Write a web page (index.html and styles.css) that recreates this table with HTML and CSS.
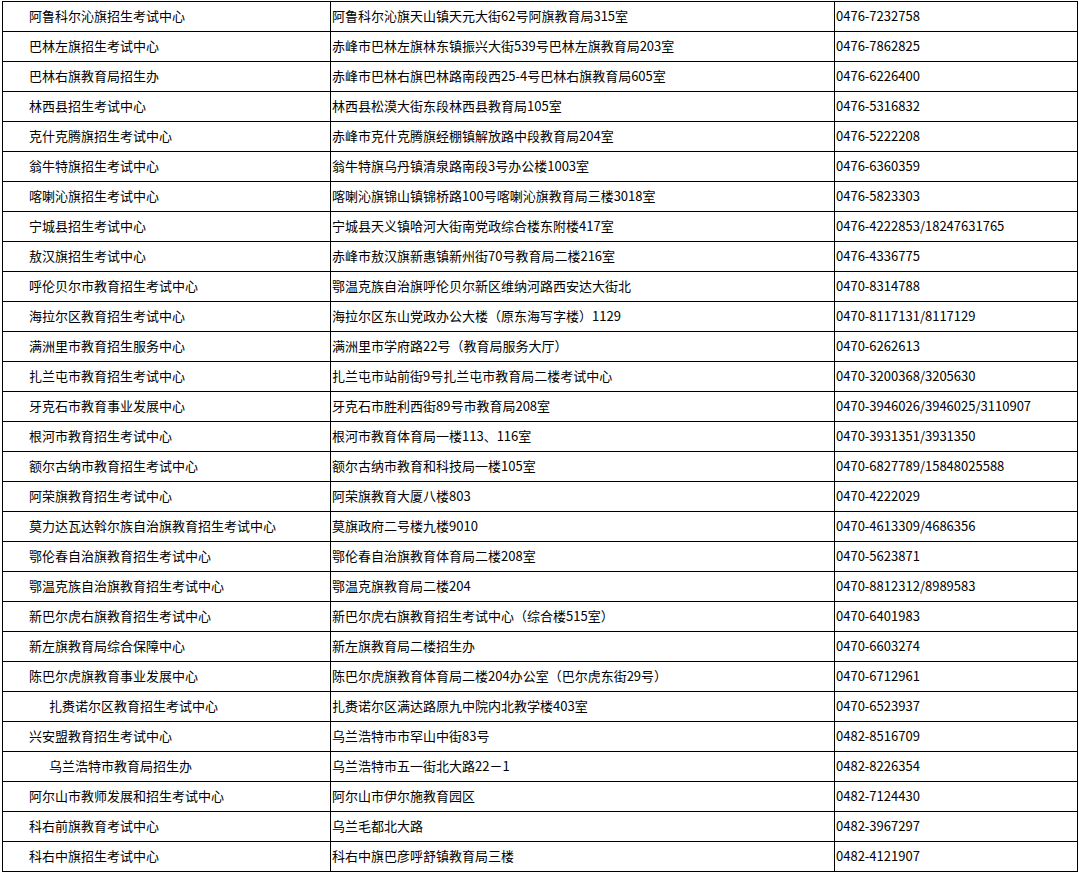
FILE: index.html
```html
<!DOCTYPE html>
<html lang="zh-CN">
<head>
<meta charset="utf-8">
<title>招生考试机构</title>
<link rel="stylesheet" href="styles.css">
</head>
<body>
<table class="tbl">
<colgroup><col class="w1"><col class="w2"><col class="w3"></colgroup>
<tbody>
<tr><td class="c1">阿鲁科尔沁旗招生考试中心</td><td class="c2">阿鲁科尔沁旗天山镇天元大街62号阿旗教育局315室</td><td class="c3">0476-7232758</td></tr>
<tr><td class="c1">巴林左旗招生考试中心</td><td class="c2">赤峰市巴林左旗林东镇振兴大街539号巴林左旗教育局203室</td><td class="c3">0476-7862825</td></tr>
<tr><td class="c1">巴林右旗教育局招生办</td><td class="c2">赤峰市巴林右旗巴林路南段西25-4号巴林右旗教育局605室</td><td class="c3">0476-6226400</td></tr>
<tr><td class="c1">林西县招生考试中心</td><td class="c2">林西县松漠大街东段林西县教育局105室</td><td class="c3">0476-5316832</td></tr>
<tr><td class="c1">克什克腾旗招生考试中心</td><td class="c2">赤峰市克什克腾旗经棚镇解放路中段教育局204室</td><td class="c3">0476-5222208</td></tr>
<tr><td class="c1">翁牛特旗招生考试中心</td><td class="c2">翁牛特旗乌丹镇清泉路南段3号办公楼1003室</td><td class="c3">0476-6360359</td></tr>
<tr><td class="c1">喀喇沁旗招生考试中心</td><td class="c2">喀喇沁旗锦山镇锦桥路100号喀喇沁旗教育局三楼3018室</td><td class="c3">0476-5823303</td></tr>
<tr><td class="c1">宁城县招生考试中心</td><td class="c2">宁城县天义镇哈河大街南党政综合楼东附楼417室</td><td class="c3">0476-4222853/18247631765</td></tr>
<tr><td class="c1">敖汉旗招生考试中心</td><td class="c2">赤峰市敖汉旗新惠镇新州街70号教育局二楼216室</td><td class="c3">0476-4336775</td></tr>
<tr><td class="c1">呼伦贝尔市教育招生考试中心</td><td class="c2">鄂温克族自治旗呼伦贝尔新区维纳河路西安达大街北</td><td class="c3">0470-8314788</td></tr>
<tr><td class="c1">海拉尔区教育招生考试中心</td><td class="c2">海拉尔区东山党政办公大楼（原东海写字楼）1129</td><td class="c3">0470-8117131/8117129</td></tr>
<tr><td class="c1">满洲里市教育招生服务中心</td><td class="c2">满洲里市学府路22号（教育局服务大厅）</td><td class="c3">0470-6262613</td></tr>
<tr><td class="c1">扎兰屯市教育招生考试中心</td><td class="c2">扎兰屯市站前街9号扎兰屯市教育局二楼考试中心</td><td class="c3">0470-3200368/3205630</td></tr>
<tr><td class="c1">牙克石市教育事业发展中心</td><td class="c2">牙克石市胜利西街89号市教育局208室</td><td class="c3">0470-3946026/3946025/3110907</td></tr>
<tr><td class="c1">根河市教育招生考试中心</td><td class="c2">根河市教育体育局一楼113、116室</td><td class="c3">0470-3931351/3931350</td></tr>
<tr><td class="c1">额尔古纳市教育招生考试中心</td><td class="c2">额尔古纳市教育和科技局一楼105室</td><td class="c3">0470-6827789/15848025588</td></tr>
<tr><td class="c1">阿荣旗教育招生考试中心</td><td class="c2">阿荣旗教育大厦八楼803</td><td class="c3">0470-4222029</td></tr>
<tr><td class="c1">莫力达瓦达斡尔族自治旗教育招生考试中心</td><td class="c2">莫旗政府二号楼九楼9010</td><td class="c3">0470-4613309/4686356</td></tr>
<tr><td class="c1">鄂伦春自治旗教育招生考试中心</td><td class="c2">鄂伦春自治旗教育体育局二楼208室</td><td class="c3">0470-5623871</td></tr>
<tr><td class="c1">鄂温克族自治旗教育招生考试中心</td><td class="c2">鄂温克旗教育局二楼204</td><td class="c3">0470-8812312/8989583</td></tr>
<tr><td class="c1">新巴尔虎右旗教育招生考试中心</td><td class="c2">新巴尔虎右旗教育招生考试中心（综合楼515室）</td><td class="c3">0470-6401983</td></tr>
<tr><td class="c1">新左旗教育局综合保障中心</td><td class="c2">新左旗教育局二楼招生办</td><td class="c3">0470-6603274</td></tr>
<tr><td class="c1">陈巴尔虎旗教育事业发展中心</td><td class="c2">陈巴尔虎旗教育体育局二楼204办公室（巴尔虎东街29号）</td><td class="c3">0470-6712961</td></tr>
<tr><td class="c1 ind">扎赉诺尔区教育招生考试中心</td><td class="c2">扎赉诺尔区满达路原九中院内北教学楼403室</td><td class="c3">0470-6523937</td></tr>
<tr><td class="c1">兴安盟教育招生考试中心</td><td class="c2">乌兰浩特市市罕山中街83号</td><td class="c3">0482-8516709</td></tr>
<tr><td class="c1 ind">乌兰浩特市教育局招生办</td><td class="c2">乌兰浩特市五一街北大路22－1</td><td class="c3">0482-8226354</td></tr>
<tr><td class="c1">阿尔山市教师发展和招生考试中心</td><td class="c2">阿尔山市伊尔施教育园区</td><td class="c3">0482-7124430</td></tr>
<tr><td class="c1">科右前旗教育考试中心</td><td class="c2">乌兰毛都北大路</td><td class="c3">0482-3967297</td></tr>
<tr><td class="c1">科右中旗招生考试中心</td><td class="c2">科右中旗巴彦呼舒镇教育局三楼</td><td class="c3">0482-4121907</td></tr>
</tbody>
</table>
</body>
</html>
```
FILE: styles.css
```css
html, body {
  margin: 0;
  padding: 0;
  background: #fff;
}
body {
  padding: 1px 0 0 2px;
  font-family: "Noto Sans CJK SC", "Liberation Sans", sans-serif;
  font-size: 13px;
  color: #000;
}
.tbl {
  border-collapse: collapse;
  table-layout: fixed;
  width: 1075px;
}
.w1 { width: 328px; }
.w2 { width: 504px; }
.w3 { width: 243px; }
.tbl td {
  border: 1px solid #000;
  height: 27px;
  padding: 0 0 2px 0;
  vertical-align: middle;
  white-space: nowrap;
  line-height: 16px;
  overflow: hidden;
}
.c1 { padding-left: 26px !important; }
.c1.ind { padding-left: 46px !important; }
.c2 { padding-left: 1px !important; }
.c3 { padding-left: 1px !important; }
```
